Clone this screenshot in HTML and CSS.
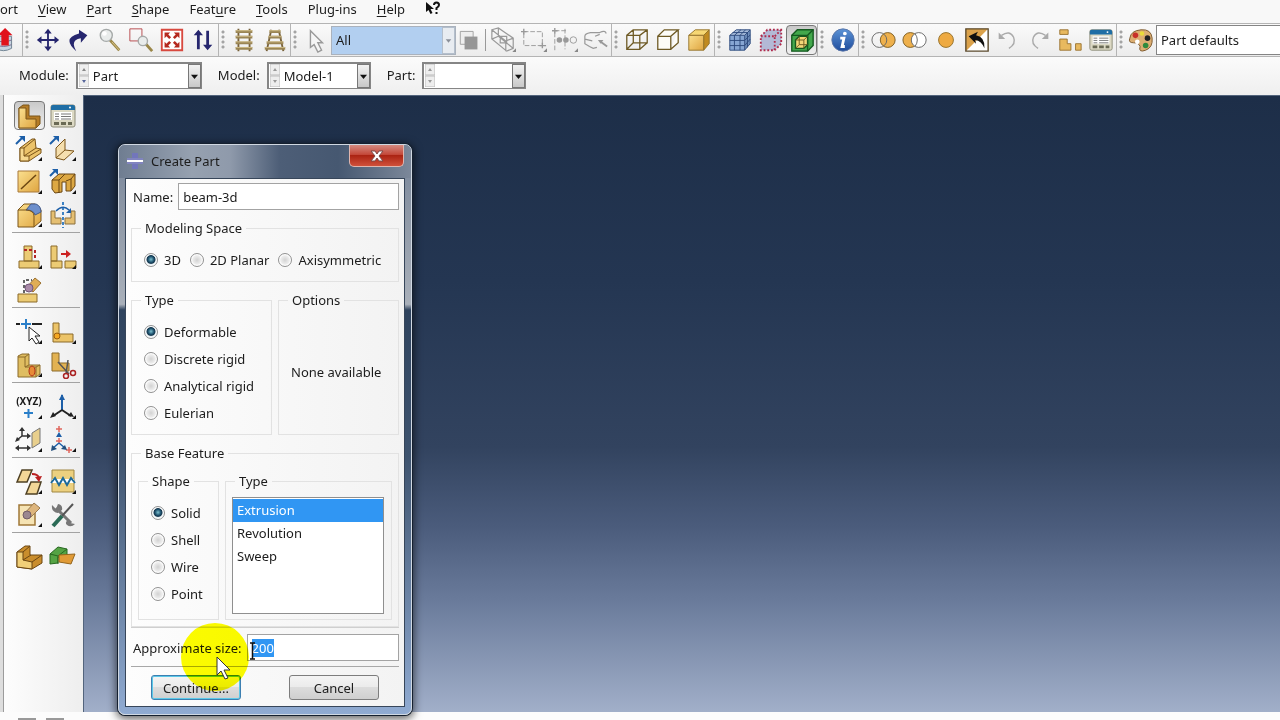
FILE: index.html
```
<!DOCTYPE html>
<html lang="en">
<head>
	<meta charset="UTF-8">
	<meta name="viewport" content="width=device-width, initial-scale=1">
	<title>Create Part</title>
	<link rel="stylesheet" href="styles.css">
</head>
<body>
	<!-- shared shapes -->
	<svg class="defs" width="0" height="0">
		<defs>
			<linearGradient id="gold" x1="0" y1="0" x2="1" y2="1">
				<stop offset="0" stop-color="#fbe08f"/>
				<stop offset="1" stop-color="#dfa540"/>
			</linearGradient>
			<linearGradient id="blue" x1="0" y1="0" x2="0" y2="1">
				<stop offset="0" stop-color="#5b93d6"/>
				<stop offset="1" stop-color="#1f4c9c"/>
			</linearGradient>
			<symbol id="manager" viewBox="0 0 28 28">
				<rect x="2" y="3" width="24" height="22" rx="2" fill="#dcd9c4" stroke="#8d8b78"/>
				<path d="M2 8V5q0-2 2-2h20q2 0 2 2v3z" fill="#1f6ea5"/>
				<circle cx="21" cy="5.500" r="1" fill="#fff"/>
				<rect x="5" y="10" width="18" height="8" fill="#fff"/>
				<path d="M6 12h4M6 14.500h4M6 17h4M12 12h10M12 14.500h10M12 17h10" stroke="#777"/>
				<path d="M5 20h5v3H5zM12 20h5v3h-5zM19 20h4v3h-4z" fill="#6a6a55"/>
			</symbol>
			<symbol id="corner" viewBox="0 0 28 28"><path d="M27 22v4h-4z" fill="#111"/></symbol>
		</defs>
	</svg>

	<nav class="menu">
		<a href="#">ort</a>
		<a href="#"><u>V</u>iew</a>
		<a href="#"><u>P</u>art</a>
		<a href="#"><u>S</u>hape</a>
		<a href="#">Feat<u>u</u>re</a>
		<a href="#"><u>T</u>ools</a>
		<a href="#">Plu<u>g</u>-ins</a>
		<a href="#"><u>H</u>elp</a>
		<button class="whats-this" aria-label="What's this"><svg width="16" height="16" viewBox="0 0 16 16"><path d="M1 1v10l2.500-2 2 4 2-1-2-4H9z" fill="#111"/><path d="M9 4q0-2.500 2.500-2.500T14 4q0 1.500-2.500 3v2M11.500 11v2" fill="none" stroke="#111" stroke-width="2"/></svg></button>
	</nav>

	<div class="toolbar">
		<div class="group first">
			<button aria-label="Database"><svg viewBox="0 0 28 28"><path d="M3 10v13q8 5 17 0V10z" fill="#c6d3df" stroke="#6c7f90"/><path d="M3 14q8 4 17 0M3 19q8 4 17 0" fill="none" stroke="#7a6d90"/><path d="M9 20V9H5l8-8 8 8h-4v11z" fill="#e0121b"/></svg></button>
		</div>
		<div class="group">
			<i class="grip"></i>
			<button aria-label="Pan"><svg viewBox="0 0 28 28"><path d="M14 5v18M5 14h18" stroke="#26266e" stroke-width="2"/><path d="M14 2l4 5h-8zM14 26l4-5h-8zM2 14l5-4v8zM26 14l-5-4v8z" fill="#26266e"/></svg></button>
			<button aria-label="Rotate"><svg viewBox="0 0 28 28"><path d="M11 26Q-5 12 14 7V3l9 6-7 8v-5Q4 14 11 26z" fill="#26266e"/></svg></button>
			<button aria-label="Magnify"><svg viewBox="0 0 28 28"><path d="M14 14l10 11" stroke="#9a8647" stroke-width="3"/><path d="M16 16l8 9" stroke="#ddc98d"/><circle cx="10" cy="9" r="6.500" fill="#e9eceb" stroke="#a5a9a8" stroke-width="1.500"/><circle cx="8" cy="7" r="2.500" fill="#fff"/></svg></button>
			<button aria-label="Box zoom"><svg viewBox="0 0 28 28"><path d="M2 2h13v13H2z" fill="none" stroke="#b5454a"/><path d="M19 18l7 8" stroke="#9a8647" stroke-width="3"/><circle cx="16" cy="15" r="5" fill="#e9eceb" stroke="#a5a9a8" stroke-width="1.500"/></svg></button>
			<button aria-label="Fit view"><svg viewBox="0 0 28 28"><path d="M3 3h22v22H3z" fill="#fff" stroke="#d8493f" stroke-width="2"/><path d="M6 6h6l-2 2 3 3-2 2-3-3-2 2zM22 6h-6l2 2-3 3 2 2 3-3 2 2zM6 22h6l-2-2 3-3-2-2-3 3-2-2zM22 22h-6l2-2-3-3 2-2 3 3 2-2z" fill="#b52a20"/></svg></button>
			<button aria-label="Cycle views"><svg viewBox="0 0 28 28"><path d="M9 7v17M19 4v17" stroke="#26266e" stroke-width="3"/><path d="M9 3l5 6H4zM19 25l5-6H14z" fill="#26266e"/></svg></button>
		</div>
		<div class="group">
			<i class="grip"></i>
			<button aria-label="Parallel"><svg viewBox="0 0 28 28"><path d="M8 2v24M20 2v24" stroke="#77613a" stroke-width="2"/><path d="M5 5h18M5 11h18M5 17h18M5 23h18" stroke="#9a8554" stroke-width="3"/><path d="M5 4h18M5 10h18M5 16h18M5 22h18" stroke="#d1bd87"/></svg></button>
			<button aria-label="Perspective"><svg viewBox="0 0 28 28"><path d="M10 3L5 26M18 3l5 23" stroke="#77613a" stroke-width="2"/><path d="M8 5h12M7 11h14M5 17h18M3 23h22" stroke="#9a8554" stroke-width="3"/><path d="M8 4h12M7 10h14M5 16h18M3 22h22" stroke="#d1bd87"/></svg></button>
		</div>
		<div class="group">
			<i class="grip"></i>
			<button aria-label="Select"><svg viewBox="0 0 28 28"><path d="M8 4v18l4-3 4 8 4-2-4-8h5z" fill="#f6f6f6" stroke="#9a9a9a" stroke-width="1.500"/></svg></button>
			<div class="combo filter">
				<select aria-label="Selection filter"><option>All</option></select>
				<svg class="drop" viewBox="0 0 12 27"><path d="M3 12h6l-3 4z" fill="#8a8f98"/></svg>
			</div>
			<button class="narrow" aria-label="Highlight"><svg viewBox="0 0 28 28"><path d="M5 4h15v15H5z" fill="#eee" stroke="#999"/><path d="M10 10h15v15H10z" fill="#969696"/></svg></button>
			<i class="bar"></i>
			<button aria-label="Select entities"><svg viewBox="0 0 28 28"><g fill="none" stroke="#999" stroke-width="1.300"><path d="M2 3l7-2 16 11v11l-7 3L2 13zM2 3l15 12v11M17 15l8-3M9 1v9l16 13M2 13l7-3M11 10h7v7h-7z"/></g><path d="M28 23v4h-4z" fill="#888"/></svg></button>
			<button aria-label="Select by area"><svg viewBox="0 0 28 28"><path d="M3 5h20v15H3z" fill="none" stroke="#999" stroke-dasharray="5 2"/><path d="M0 5h6M3 2v6M20 20h7M23 17v6" stroke="#999" stroke-width="1.500"/><path d="M28 23v4h-4z" fill="#888"/></svg></button>
			<button aria-label="Drag shape"><svg viewBox="0 0 28 28"><path d="M3 25V4h14M14 2v22" fill="none" stroke="#999" stroke-dasharray="5 2"/><path d="M0 4h6M3 1v6" stroke="#999" stroke-width="1.500"/><circle cx="8" cy="14" r="3" fill="#999"/><circle cx="15" cy="14" r="3" fill="#999"/><circle cx="23" cy="14" r="3.500" fill="none" stroke="#999"/><path d="M28 23v4h-4z" fill="#888"/></svg></button>
			<button aria-label="Select from angle"><svg viewBox="0 0 28 28"><path d="M2 10q0-3 6-4l10 0q6-3 7 1M2 10v8l5 3 4 2 4-1M2 13l8 2M13 10l5-2" fill="none" stroke="#999" stroke-width="1.300"/><path d="M26 21l-7-5" stroke="#999" stroke-width="2"/><path d="M16 14l6 0-3 4z" fill="#999"/></svg></button>
		</div>
		<div class="group">
			<i class="grip"></i>
			<button aria-label="Wireframe"><svg viewBox="0 0 28 28"><path d="M3 9h14v15H3zM10 3h15v14H10zM3 9l7-6M17 9l8-6M17 24l8-7M3 24l7-7" fill="none" stroke="#6e5a25" stroke-width="1.400"/></svg></button>
			<button aria-label="Hidden line"><svg viewBox="0 0 28 28"><path d="M3 10h14v14H3zM3 10l7-7h15l-8 7M25 3v14l-8 7" fill="#fdfcf7" stroke="#6e5a25" stroke-width="1.400"/></svg></button>
			<button aria-label="Shaded"><svg viewBox="0 0 28 28"><path d="M3 9l7-6h15l-6 6z" fill="#f6d774" stroke="#94722a"/><path d="M19 9l6-6v15l-6 7z" fill="#c08a20" stroke="#94722a"/><path d="M3 9h16v16H3z" fill="url(#gold)" stroke="#94722a"/></svg></button>
		</div>
		<div class="group">
			<i class="grip"></i>
			<button aria-label="Mesh"><svg viewBox="0 0 28 28"><path d="M3 9l7-6h15l-6 6z" fill="#a8bddb"/><path d="M19 9l6-6v15l-6 7z" fill="#6d8dbb"/><path d="M3 9h16v16H3z" fill="#86a6d3"/><path d="M3 9h16v16H3zM3 14.500h16l6-6M3 20h16l6-7M8 25V9l7-6M14 25V9l6-6M3 9l7-6h15v15l-6 7M19 9l6-6M22 22V6H6" fill="none" stroke="#2c4a7c"/></svg></button>
			<button aria-label="Seeds"><svg viewBox="0 0 28 28"><path d="M3 10l7-7h15v15l-7 7H3z" fill="#b3b9d6"/><path d="M3 10h15v15H3zM3 10l7-7h15v15l-7 7M18 10l7-7" fill="none" stroke="#b02b4c" stroke-width="2" stroke-dasharray="2 2"/></svg></button>
			<button class="on" aria-label="Reference representation"><svg viewBox="0 0 28 28"><path d="M3 9l6-6h17v17l-6 6H3z" fill="#43a84c" stroke="#155a20" stroke-width="1.500"/><path d="M3 9h17v17M20 9l6-6" fill="none" stroke="#155a20" stroke-width="1.500"/><path d="M7 14l4-4h9v9l-4 4H7z" fill="#f3d778" stroke="#155a20" stroke-width="1.500"/><path d="M7 14h9v9M16 14l4-4M11 10v9h9M11 19l-4 4" fill="none" stroke="#6b5a20"/></svg></button>
		</div>
		<div class="group">
			<i class="grip"></i>
			<button aria-label="Query"><svg viewBox="0 0 28 28"><circle cx="14" cy="14" r="12" fill="url(#blue)" stroke="#5b76a8"/><circle cx="16" cy="7" r="2" fill="#fff"/><path d="M11 12h4l-2 9h3" fill="none" stroke="#fff" stroke-width="3"/></svg></button>
		</div>
		<div class="group">
			<i class="grip"></i>
			<button aria-label="Replace"><svg viewBox="0 0 28 28"><circle cx="18" cy="14" r="8" fill="#eeb04c" stroke="#7b5c22"/><circle cx="9" cy="14" r="8" fill="none" stroke="#666"/></svg></button>
			<button aria-label="Remove"><svg viewBox="0 0 28 28"><circle cx="9" cy="14" r="8" fill="#eeb04c" stroke="#7b5c22"/><circle cx="18" cy="14" r="8" fill="#fff" stroke="#666"/><path d="M14 7q5 7 0 14" fill="none" stroke="#666"/></svg></button>
			<button aria-label="Intersect"><svg viewBox="0 0 28 28"><circle cx="14" cy="14" r="8" fill="#eeaa42" stroke="#94702a"/></svg></button>
			<button aria-label="Either"><svg viewBox="0 0 28 28"><path d="M2 2h24v24H2z" fill="#fff"/><path d="M2 2h24L2 26z" fill="#dba24b"/><path d="M2 2h24v24H2z" fill="none" stroke="#5b4a2d" stroke-width="1.500"/><path d="M5 10l10-5-2 4q10 2 9 14-3-8-10-9l1 4z" fill="#111"/></svg></button>
			<button aria-label="Undo"><svg viewBox="0 0 28 28"><path d="M7 9q9-6 13 2 3 7-5 12" fill="none" stroke="#aaa" stroke-width="1.500"/><path d="M4 6v7h7z" fill="#aaa"/></svg></button>
			<button aria-label="Redo"><svg viewBox="0 0 28 28"><path d="M21 9Q12 3 8 11q-3 7 5 12" fill="none" stroke="#aaa" stroke-width="1.500"/><path d="M24 6v7h-7z" fill="#aaa"/></svg></button>
			<button aria-label="Display groups"><svg viewBox="0 0 28 28"><path d="M3 3h9v5H3zM3 25V13h8v5h4v7zM20 18h6v7h-6z" fill="#e8b95f" stroke="#9a7432"/></svg></button>
			<button aria-label="Display group manager"><svg><use href="#manager"/></svg></button>
		</div>
		<div class="group last">
			<i class="grip"></i>
			<button class="palette" aria-label="Color code"><svg viewBox="0 0 28 28"><path d="M2 12Q3 4 14 3t12 9-7 13-6-4q-1-4-7-4t-4-5z" fill="#dcae72" stroke="#79552a"/><circle cx="8" cy="9" r="3" fill="#c8302a"/><circle cx="15" cy="7" r="2.500" fill="#eadb3a"/><circle cx="21" cy="12" r="3" fill="#222"/><circle cx="19" cy="20" r="3" fill="#2f8a3d"/><circle cx="10" cy="16" r="2.500" fill="#fff"/></svg></button>
			<div class="combo defaults">
				<select aria-label="Color mapping"><option>Part defaults</option></select>
			</div>
		</div>
	</div>

	<div class="context">
		<label for="module">Module:</label>
		<div class="combo wide">
			<svg class="spin" viewBox="0 0 10 23"><path d="M0 0h10v11H0zM0 12h10v11H0z" fill="#eee" stroke="#bbb"/><path d="M3 7h4L5 4z" fill="#888"/><path d="M3 16h4l-2 3z" fill="#57669a"/></svg>
			<select id="module"><option>Part</option></select>
			<svg class="drop" viewBox="0 0 12 25"><path d="M2 11h8l-4 5z" fill="#111"/></svg>
		</div>
		<label for="model">Model:</label>
		<div class="combo">
			<svg class="spin" viewBox="0 0 10 23"><path d="M0 0h10v11H0zM0 12h10v11H0z" fill="#eee" stroke="#bbb"/><path d="M3 7h4L5 4zM3 16h4l-2 3z" fill="#999"/></svg>
			<select id="model"><option>Model-1</option></select>
			<svg class="drop" viewBox="0 0 12 25"><path d="M2 11h8l-4 5z" fill="#111"/></svg>
		</div>
		<label for="part">Part:</label>
		<div class="combo">
			<svg class="spin" viewBox="0 0 10 23"><path d="M0 0h10v11H0zM0 12h10v11H0z" fill="#eee" stroke="#bbb"/><path d="M3 7h4L5 4zM3 16h4l-2 3z" fill="#999"/></svg>
			<select id="part"><option></option></select>
			<svg class="drop" viewBox="0 0 12 25"><path d="M2 11h8l-4 5z" fill="#111"/></svg>
		</div>
	</div>

	<main>
		<div class="tree-edge"></div>
		<div class="toolbox">
			<div class="tools">
				<button class="on" aria-label="Create part"><svg viewBox="0 0 28 28"><path d="M4 6l4-3h6v11h11v8l-4 4H4z" fill="#b57c26" stroke="#7b5418"/><path d="M4 6h7v11h10v9H4z" fill="url(#gold)" stroke="#7b5418"/></svg></button>
				<button aria-label="Part manager"><svg><use href="#manager"/></svg></button>
				<button aria-label="Solid extrude"><svg viewBox="0 0 28 28"><path d="M5 13L17 4h3l1 9 5 1v4L14 26H5z" fill="#ecc36a" stroke="#7b5418"/><path d="M5 13h4v8h5v5H5zM9 13l11-9M9 21l12-8M14 21l12-7" fill="#f7d98f" stroke="#7b5418"/><path d="M1 9l6-6" stroke="#1d5fa8" stroke-width="2"/><path d="M4 1h6v6z" fill="#1d5fa8"/><use href="#corner"/></svg></button>
				<button aria-label="Shell extrude"><svg viewBox="0 0 28 28"><path d="M7 13l9-9v11l9 1-10 9-8-2z" fill="#f5dfae" stroke="#7b5418"/><path d="M7 23l9-8" stroke="#7b5418"/><path d="M1 9l6-6" stroke="#1d5fa8" stroke-width="2"/><path d="M4 1h6v6z" fill="#1d5fa8"/><use href="#corner"/></svg></button>
				<button aria-label="Create wire"><svg viewBox="0 0 28 28"><path d="M3 3h21v21H3z" fill="url(#gold)" stroke="#a8793a"/><path d="M6 21L21 7" stroke="#6b4612" stroke-width="1.500"/><use href="#corner"/></svg></button>
				<button aria-label="Cut extrude"><svg viewBox="0 0 28 28"><path d="M3 12l7-6h16v12l-4 5h-5V14h-4v10l-7 1-3-4z" fill="#dda843" stroke="#6b4612"/><path d="M3 12h7v13M17 13l5-2v12M10 12l6-6M22 11l4-5" fill="none" stroke="#6b4612"/><path d="M1 8l5-5" stroke="#1d5fa8" stroke-width="2"/><path d="M3 1h6v6z" fill="#1d5fa8"/><use href="#corner"/></svg></button>
				<button aria-label="Round edges"><svg viewBox="0 0 28 28"><path d="M3 9l6-6h11l6 6v11l-7 6H3z" fill="url(#gold)" stroke="#7b5418"/><path d="M11 9l5-6h5q5 2 5 8l-6 3q-1-5-9-5z" fill="#6d8fcc" stroke="#445b8a"/><path d="M3 9h9q7 1 7 6v11" fill="none" stroke="#7b5418"/><use href="#corner"/></svg></button>
				<button aria-label="Mirror"><svg viewBox="0 0 28 28"><path d="M2 10h4v7h6v6H2zM26 10h-4v7h-6v6h10z" fill="#e5bf72" stroke="#8b713e"/><path d="M14 1v26" stroke="#3e83c4" stroke-width="2" stroke-dasharray="3 2"/><path d="M7 10q7-7 13-1" fill="none" stroke="#1d5fa8" stroke-width="1.500"/><path d="M22 12h-5l5-5z" fill="#1d5fa8"/></svg></button>
			</div>
			<div class="tools">
				<button aria-label="Edit feature"><svg viewBox="0 0 28 28"><path d="M9 3h8v15H9zM4 18h20v7H4z" fill="#eccb74" stroke="#8b6b2a"/><path d="M9 7h10M20 7v10" stroke="#b32626" stroke-width="2" stroke-dasharray="3 2"/><use href="#corner"/></svg></button>
				<button aria-label="Suppress feature"><svg viewBox="0 0 28 28"><path d="M2 3h6v15H2zM2 18h11v7H2zM16 18h11v7H16z" fill="#eccb74" stroke="#8b6b2a"/><path d="M12 11h6" stroke="#c22" stroke-width="2"/><path d="M17 7l5 4-5 4z" fill="#c22"/><use href="#corner"/></svg></button>
				<button aria-label="Delete feature"><svg viewBox="0 0 28 28"><path d="M3 18h19v8H3z" fill="#eccb74" stroke="#8b6b2a"/><path d="M9 17V4h8" fill="none" stroke="#333" stroke-width="1.500" stroke-dasharray="3 2"/><path d="M12 11l8-9 6 5-8 9z" fill="#e0ad55" stroke="#9c7232"/><circle cx="14" cy="12" r="4" fill="#a98aa8" stroke="#73577a"/></svg></button>
			</div>
			<div class="tools">
				<button aria-label="Pick datum"><svg viewBox="0 0 28 28"><path d="M1 6h4M17 6h10" stroke="#222" stroke-width="2"/><path d="M6 6h10M11 1v10" stroke="#2a7fc9" stroke-width="2"/><path d="M14 9v14l3-3 4 6 3-2-4-6h5z" fill="#fff" stroke="#222"/><use href="#corner"/></svg></button>
				<button aria-label="Partition edge"><svg viewBox="0 0 28 28"><path d="M4 5h6v11h14v8H4z" fill="#ecc469" stroke="#8b6b2a"/><circle cx="8" cy="18" r="3" fill="#f5a822" stroke="#9a5c10"/><use href="#corner"/></svg></button>
				<button aria-label="Partition cell"><svg viewBox="0 0 28 28"><path d="M3 5l4-2h7v11h11v9l-4 3H3z" fill="#dfbd61" stroke="#8b6b2a"/><path d="M3 6h7v10h11v10M10 6l4-3M10 16l4-2M21 16l4-2" fill="none" stroke="#8b6b2a"/><ellipse cx="17" cy="20" rx="3" ry="5" fill="#e88a36" stroke="#b03218"/><use href="#corner"/></svg></button>
				<button aria-label="Cut geometry"><svg viewBox="0 0 28 28"><path d="M3 2h7v10h10v8H3z" fill="#e2b252" stroke="#8b6b2a"/><path d="M9 11l11 12M19 9l-2 14" stroke="#555" stroke-width="1.500"/><circle cx="17" cy="25" r="2.500" fill="none" stroke="#a22" stroke-width="1.500"/><circle cx="24" cy="22" r="2.500" fill="none" stroke="#a22" stroke-width="1.500"/></svg></button>
			</div>
			<div class="tools">
				<button class="xyz" aria-label="Datum point"><span>(XYZ)</span><svg viewBox="0 0 28 28"><path d="M9 20h9M13.500 16v9" stroke="#2a7fc9" stroke-width="2"/><use href="#corner"/></svg></button>
				<button aria-label="Datum axis"><svg viewBox="0 0 28 28"><path d="M13 2v16" stroke="#1d5fa8" stroke-width="2"/><path d="M13 17l-9 6M13 17l9 6" stroke="#222" stroke-width="2"/><path d="M13 1l3 6h-6z" fill="#1d5fa8"/><path d="M1 25l3-6 3 4zM25 24l-6-1 3-4z" fill="#222"/><use href="#corner"/></svg></button>
				<button aria-label="Datum plane"><svg viewBox="0 0 28 28"><path d="M7 3v7h7M7 10l-5 4M3 22h11" fill="none" stroke="#333" stroke-width="1.500"/><path d="M7 1l3 4H4zM16 10l-4-3v6zM0 16l2-5 3 3zM0 22l4-3v6zM16 22l-4-3v6z" fill="#333"/><path d="M17 7l8-5v15l-8 5z" fill="#e8cf8d" stroke="#777"/><use href="#corner"/></svg></button>
				<button aria-label="Datum csys"><svg viewBox="0 0 28 28"><path d="M7 3h6M10 0v6M7 15h6M10 12v6M17 24h6M20 21v6" stroke="#e0655c" stroke-width="1.500"/><path d="M10 6l3 5H7z" fill="#1d5fa8"/><path d="M10 17l-6 5M10 17l6 5" stroke="#1d5fa8" stroke-width="1.500"/><path d="M2 25l1-6 5 4zM18 24l-6-1 4-4z" fill="#24507e"/><use href="#corner"/></svg></button>
			</div>
			<div class="tools">
				<button aria-label="Edit mesh"><svg viewBox="0 0 28 28"><path d="M7 2h10l-5 12H2zM16 14h10l-4 12H11z" fill="#f3d797" stroke="#4f4124" stroke-width="1.500"/><path d="M17 6q6 0 7 4" fill="none" stroke="#b22" stroke-width="2"/><path d="M27 8l-3 6-4-5z" fill="#b22"/><use href="#corner"/></svg></button>
				<button aria-label="Repair"><svg viewBox="0 0 28 28"><path d="M3 2h22v22H3z" fill="#ecd07f" stroke="#a08742"/><path d="M3 13h22" stroke="#fff" stroke-width="4"/><path d="M2 15l4-5 4 7 4-7 4 7 4-7 4 5" fill="none" stroke="#1d6a9a" stroke-width="2"/><use href="#corner"/></svg></button>
				<button aria-label="Erase"><svg viewBox="0 0 28 28"><path d="M4 4h16v20H4z" fill="#f5e3b3" stroke="#a07838" stroke-width="1.500"/><path d="M10 12l9-10 6 5-9 9z" fill="#ddb57c" stroke="#9a7a50"/><circle cx="12" cy="14" r="4" fill="#9b8790" stroke="#735c66"/><use href="#corner"/></svg></button>
				<button aria-label="Tools"><svg viewBox="0 0 28 28"><path d="M7 7l15 15" stroke="#777" stroke-width="3"/><path d="M3 4l4 4 2-5q5 1 4 6l-4 3Q2 11 3 4zM26 23l-5-1-1-4q-5 3-2 6 4 3 8-1z" fill="#777"/><path d="M24 3L13 15" stroke="#555" stroke-width="2"/><path d="M13 15l-9 10" stroke="#2a6a55" stroke-width="4"/></svg></button>
			</div>
			<div class="tools">
				<button aria-label="Solid part"><svg viewBox="0 0 28 28"><path d="M2 9l8-6h5v9h12v8l-10 6L2 24z" fill="#c98d2c" stroke="#6b4612"/><path d="M2 9h6v8l9 2v7L2 24zM8 9l7-6M8 17l8-5M17 19l10-7" fill="#f1cf78" stroke="#6b4612"/></svg></button>
				<button aria-label="Assembly"><svg viewBox="0 0 28 28"><path d="M1 11l8-7 9 2v8l-5 1-4-1v6l-8 1z" fill="#55a344" stroke="#27671f"/><path d="M1 11l8 2 9-7M9 13v8" fill="none" stroke="#27671f"/><path d="M10 12l16-1-4 10-12-2z" fill="#e09a36" stroke="#94651c"/></svg></button>
			</div>
		</div>

		<div class="viewport">
			<dialog class="window" open aria-labelledby="dialog-title">
				<div class="titlebar">
					<svg width="18" height="18" viewBox="0 0 18 18"><path d="M6 1h6v16H6z" fill="#7276bb"/><path d="M1 6h16v6H1z" fill="#8184bf"/><path d="M1 8h16v2H1z" fill="#fff"/></svg>
					<h1 id="dialog-title">Create Part</h1>
					<button class="close" aria-label="Close"><svg width="14" height="12" viewBox="0 0 14 12"><path d="M1 1h4l2 3 2-3h4L9 6l4 5H9L7 8l-2 3H1l4-5z" fill="#fff" stroke="#7c4a48"/></svg></button>
				</div>
				<form class="sheet">
					<div class="field">
						<label for="name">Name:</label>
						<input type="text" id="name" value="beam-3d">
					</div>
					<fieldset>
						<legend>Modeling Space</legend>
						<div class="inline">
							<label><input type="radio" name="space" checked>3D</label>
							<label><input type="radio" name="space">2D Planar</label>
							<label><input type="radio" name="space">Axisymmetric</label>
						</div>
					</fieldset>
					<div class="split kinds">
						<fieldset>
							<legend>Type</legend>
							<label><input type="radio" name="type" checked>Deformable</label>
							<label><input type="radio" name="type">Discrete rigid</label>
							<label><input type="radio" name="type">Analytical rigid</label>
							<label><input type="radio" name="type">Eulerian</label>
						</fieldset>
						<fieldset>
							<legend>Options</legend>
							<p>None available</p>
						</fieldset>
					</div>
					<fieldset class="base">
						<legend>Base Feature</legend>
						<div class="split">
							<fieldset>
								<legend>Shape</legend>
								<label><input type="radio" name="shape" checked>Solid</label>
								<label><input type="radio" name="shape">Shell</label>
								<label><input type="radio" name="shape">Wire</label>
								<label><input type="radio" name="shape">Point</label>
							</fieldset>
							<fieldset class="method">
								<legend>Type</legend>
								<select size="5" aria-label="Type">
									<option selected>Extrusion</option>
									<option>Revolution</option>
									<option>Sweep</option>
								</select>
							</fieldset>
						</div>
					</fieldset>
					<div class="field size">
						<label for="size">Approximate size:</label>
						<input type="text" id="size" value="200">
					</div>
					<div class="actions">
						<button type="button" class="default">Continue...</button>
						<button type="button">Cancel</button>
					</div>
				</form>
				<i class="spot"></i>
				<svg class="pointer" width="16" height="24" viewBox="0 0 16 24"><path d="M1 1v18l4-4 4 8 3-1-4-8h6z" fill="#fff" stroke="#333"/></svg>
				<svg class="ibeam" width="7" height="18" viewBox="0 0 7 18"><path d="M1 1h5M1 17h5M3.500 1v16" fill="none" stroke="#111" stroke-width="1.500"/></svg>
			</dialog>
		</div>
	</main>
	<footer class="status"><i></i><i></i></footer>

	<script>
		// the size is selected, ready to be typed over
		document.getElementById('size').select();
	</script>
</body>
</html>
```
FILE: styles.css
```
:root {
	--ink: #1c1c1c;
	--panel: #f2f2f2;
	--line: #b4b4b4;
	--select: #3096f3;
}
* {
	box-sizing: border-box;
}
body {
	background: var(--panel);
	color: var(--ink);
	font: 13px/20px "Noto Sans", "Open Sans", sans-serif;
	margin: 0;
	height: 100vh;
	overflow: hidden;
	display: flex;
	flex-direction: column;
}
button, input, select {
	font: inherit;
	color: inherit;
}
.defs {
	position: absolute;
}

/* menu */
.menu {
	display: flex;
	align-items: center;
	gap: 20px;
	height: 23px;
	padding-bottom: 6px;
	background: #f8f8f8;
}
.menu a {
	color: inherit;
	text-decoration: none;
}
.menu u {
	text-underline-offset: 2px;
}
.whats-this {
	display: flex;
	padding: 0;
	border: 0;
	background: none;
}

/* toolbars */
.toolbar {
	display: flex;
	height: 34px;
	border-top: 1px solid var(--line);
	border-bottom: 1px solid var(--line);
	background: linear-gradient(#fafafa, #ececec);
}
.group {
	display: flex;
	align-items: center;
	flex: none;
}
.group.first {
	width: 22px;
	overflow: hidden;
}
.group.first button {
	margin-left: -10px;
}
.group.last {
	flex: 1;
}
.grip {
	width: 10px;
	height: 32px;
	border-left: 1px solid #b4b4b4;
	background: radial-gradient(circle at 4px 2px, #a4a4a4 1px, transparent 2px) 0 6px / 10px 5px repeat-y;
	background-clip: content-box;
	padding: 6px 0;
}
.bar {
	width: 1px;
	height: 22px;
	margin: 0 1px 0 5px;
	background: #999;
}
.group button {
	display: flex;
	flex: none;
	align-items: center;
	justify-content: center;
	width: 31px;
	height: 30px;
	padding: 0;
	border: 0;
	background: none;
}
.group button svg {
	width: 26px;
	height: 26px;
}
.group .narrow {
	width: 24px;
}
.group .palette {
	width: 30px;
}
.group .on, .tools .on {
	border: 1px solid #777;
	border-radius: 4px;
	background: linear-gradient(#c9c9c9, #f0f0f0);
}

/* combo boxes */
.combo {
	display: flex;
	align-items: center;
	width: 104px;
	height: 27px;
	border: 2px solid #858585;
	border-right-width: 1px;
	border-bottom-width: 1px;
	background: #fff;
}
.combo.wide {
	width: 126px;
}
.combo select {
	flex: 1;
	min-width: 0;
	height: 100%;
	padding: 0 4px;
	border: 0;
	background: none;
	appearance: none;
	outline: 0;
}
.combo .spin {
	width: 10px;
	height: 23px;
	margin-left: 1px;
}
.combo .drop {
	width: 13px;
	height: 100%;
	border: 1px solid #777;
	background: linear-gradient(#f2f2f2, #c8c8c8);
}
.combo.filter {
	width: 125px;
	height: 29px;
	border: 1px solid #aab2bd;
	background: #b2cff0;
}
.combo.filter .drop {
	border-color: #b4bfcc;
	background: #e8ecf1;
}
.combo.defaults {
	flex: 1;
	height: 30px;
	border-width: 1px 0 1px 1px;
}
.context {
	display: flex;
	align-items: center;
	height: 38px;
	padding: 0 0 2px 19px;
	background: linear-gradient(#fbfbfb, #efefef);
}
.context label {
	margin-right: 7px;
}
.context .combo {
	margin-right: 16px;
}

/* left side */
main {
	display: flex;
	flex: 1;
	min-height: 0;
}
.tree-edge {
	width: 4px;
	border-right: 1px solid #9c9c9c;
	background: #dedede;
}
.toolbox {
	width: 79px;
	padding: 4px 3px 0 8px;
	background: linear-gradient(90deg, #fdfdfd, #eee);
}
.tools {
	display: grid;
	grid-template-columns: 34px 34px;
	grid-auto-rows: 33px;
	place-items: center;
}
.tools + .tools {
	margin-top: 1px;
	padding-top: 7px;
	border-top: 1px solid #a2a2a2;
}
.tools button {
	display: grid;
	place-items: center;
	width: 31px;
	height: 29px;
	padding: 0;
	border: 0;
	background: none;
}
.tools svg {
	grid-area: 1 / 1;
	width: 28px;
	height: 28px;
}
.xyz span {
	grid-area: 1 / 1;
	align-self: start;
	font-size: 10px;
	font-weight: bold;
	line-height: 18px;
}

/* viewport */
.viewport {
	position: relative;
	flex: 1;
	border-top: 1px solid #53647c;
	border-left: 1px solid #53647c;
	background: linear-gradient(#1d2e48, #243652 30%, #32435f 57%, #4b5c7c 70%, #6a7b9b 82%, #a1afc9);
}
.status {
	display: flex;
	gap: 10px;
	height: 8px;
	padding: 6px 0 0 18px;
	background: #fcfcfc;
}
.status i {
	width: 18px;
	border-top: 2px solid #999;
}

/* create part window */
.window {
	position: absolute;
	top: 48px;
	left: 34px;
	width: 294px;
	margin: 0;
	padding: 0 6px 7px;
	border: 1px solid #d0d8e2;
	border-radius: 7px;
	background: linear-gradient(#76849a, #8e98a6 12%, #a9b0ba 28%, #2f435e 29%, #3f546f 55%, #90abd2);
	box-shadow: 0 0 0 1px #15202f, 0 2px 8px 2px rgba(0, 0, 0, .6);
	color: var(--ink);
}
.titlebar {
	display: flex;
	align-items: center;
	gap: 7px;
	height: 33px;
	margin: 0 -6px;
	padding: 0 7px 2px;
	border-radius: 6px 6px 0 0;
	background: linear-gradient(90deg, #6f7d91, #96a1b0 25%, #8f9aab 38%, #4d5e77 55%, #465871 75%, #7c889a);
}
.titlebar h1 {
	flex: 1;
	margin: 0;
	font-size: 13px;
	font-weight: normal;
}
.close {
	display: flex;
	align-items: center;
	justify-content: center;
	align-self: flex-start;
	width: 55px;
	height: 22px;
	padding: 0;
	border: 1px solid #e0b5ae;
	border-top: 0;
	border-radius: 0 0 5px 5px;
	background: linear-gradient(#d58a80, #c4493a 45%, #ab2413 50%, #d0503a);
}
.sheet {
	padding: 4px 5px 6px;
	border: 1px solid #37465a;
	background: linear-gradient(90deg, #fdfdfd, #f3f3f3);
}
.field {
	display: flex;
	align-items: center;
	gap: 5px;
	padding-left: 2px;
}
.field input {
	flex: 1;
	min-width: 0;
	height: 27px;
	padding: 0 4px;
	border: 1px solid #a3a3a3;
	background: #fff;
	outline: 0;
}
.field input::selection {
	background: var(--select);
	color: #fff;
}
fieldset {
	min-width: 0;
	margin: 0;
	padding: 8px 12px;
	border: 1px solid #e2e2e2;
}
.sheet > fieldset, .sheet > .split {
	margin-top: 8px;
}
legend {
	margin-left: -3px;
	padding: 0 4px;
}
fieldset label {
	display: flex;
	align-items: center;
	gap: 6px;
	height: 27px;
	white-space: nowrap;
}
.inline {
	display: flex;
	gap: 9px;
}
.split {
	display: grid;
	grid-template-columns: 81fr 167fr;
	gap: 6px;
}
.kinds {
	grid-template-columns: 141fr 121fr;
}
.kinds p {
	margin: 44px 0 0;
	white-space: nowrap;
}
.sheet > .base {
	padding: 8px 6px 6px;
}
.base > legend {
	margin-left: 3px;
}
.sheet .method {
	padding: 6px 7px 5px 6px;
}
.method legend {
	margin-left: 3px;
}
.method select {
	display: block;
	width: 100%;
	height: 117px;
	padding: 1px 0;
	border: 1px solid #8f8f8f;
	border-radius: 0;
	background: #fff;
	outline: 0;
	overflow: hidden;
}
.method option {
	min-height: 23px;
	padding: 2px 4px;
}
.method option:checked {
	background: var(--select) linear-gradient(var(--select), var(--select));
	color: #fff;
}
input[type="radio"] {
	flex: none;
	width: 14px;
	height: 14px;
	margin: 0;
	border: 1px solid #929292;
	border-radius: 50%;
	background: radial-gradient(circle, #d2d2d2, #f0f0f0 55%);
	box-shadow: inset 0 0 0 1px #fff;
	appearance: none;
}
input[type="radio"]:checked {
	background: radial-gradient(circle at 50% 45%, #7cc0cf, #1c4f6c 3px, #17384e 4px, #e5edf2 5px);
}
.size {
	padding-top: 6px;
	padding-bottom: 5px;
	border-top: 1px solid #cfcfcf;
}
.actions {
	display: flex;
	justify-content: space-between;
	padding: 8px 20px 0;
	border-top: 1px solid #a8a8a8;
}
.actions button {
	width: 90px;
	height: 25px;
	padding: 0;
	border: 1px solid #7d7d7d;
	border-radius: 3px;
	background: linear-gradient(#f4f4f4, #ebebeb 48%, #dcdcdc 50%, #cfcfcf);
}
.actions .default {
	border-color: #3c7fb1;
	box-shadow: inset 0 0 0 1px #5bc8e8;
}

/* mouse pointer with its highlight */
.spot {
	position: absolute;
	top: 478px;
	left: 62px;
	width: 68px;
	height: 68px;
	border-radius: 50%;
	background: #ffff00;
	mix-blend-mode: multiply;
	pointer-events: none;
}
.pointer {
	position: absolute;
	top: 511px;
	left: 97px;
	pointer-events: none;
}
.ibeam {
	position: absolute;
	top: 497px;
	left: 130px;
	pointer-events: none;
}
```
